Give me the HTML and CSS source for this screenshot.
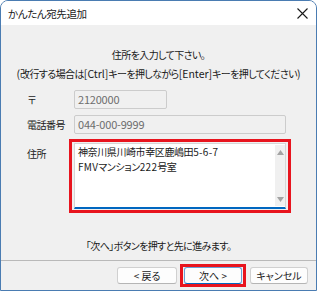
FILE: index.html
```html
<!DOCTYPE html>
<html lang="ja">
<head>
    <meta charset="UTF-8">
    <title>かんたん宛先追加</title>
    <link rel="stylesheet" href="styles.css">
</head>
<body>
    <div class="window">
        <div class="titlebar">
            <span class="title">かんたん宛先追加</span>
            <svg class="close" width="11" height="11" viewBox="0 0 11 11">
                <path d="M0.5 0.5 L10.5 10.5 M10.5 0.5 L0.5 10.5" stroke="#1a1a1a" stroke-width="1.1" fill="none"/>
            </svg>
        </div>

        <div class="content">
            <div class="intro">
                <p>住所を入力して下さい。</p>
                <p><span class="lat">(</span>改行する場合は<span class="lat">[Ctrl]</span>キーを押しながら<span class="lat">[Enter]</span>キーを押してください<span class="lat">)</span></p>
            </div>

            <div class="row">
                <span class="label">〒</span>
                <div class="field field-zip">2120000</div>
            </div>
            <div class="row">
                <span class="label">電話番号</span>
                <div class="field field-tel">044-000-9999</div>
            </div>
            <div class="row row-top">
                <span class="label">住所</span>
                <div class="highlight highlight-area">
                    <div class="address">
                        <div class="address-text">神奈川県川崎市幸区鹿嶋田<span class="lat">5-6-7</span><br><span class="lat">FMV</span>マンション<span class="lat">222</span>号室</div>
                        <div class="scrollbar">
                            <svg width="7" height="5" viewBox="0 0 7 5"><path d="M3.5 0 L7 5 L0 5 Z" fill="#a3a3a3"/></svg>
                            <svg width="7" height="5" viewBox="0 0 7 5"><path d="M0 0 L7 0 L3.5 5 Z" fill="#a3a3a3"/></svg>
                        </div>
                    </div>
                </div>
            </div>

            <p class="hint">「次へ」ボタンを押すと先に進みます。</p>
        </div>

        <div class="footer">
            <button class="btn btn-back">&lt;&nbsp;戻る</button>
            <div class="highlight highlight-btn">
                <button class="btn btn-next">次へ&nbsp;&gt;</button>
            </div>
            <button class="btn">キャンセル</button>
        </div>
    </div>
</body>
</html>
```

FILE: styles.css
```css
body {
    margin: 0;
    background: #ffffff;
    font-family: "Noto Sans CJK JP", "Noto Sans", sans-serif;
    font-size: 10px;
    color: #1a1a1a;
}

.window {
    width: 317px;
    height: 291px;
    box-sizing: border-box;
    border: 1px solid #4a7cb2;
    border-radius: 8px 8px 0 0;
    background: #f0f0f0;
    display: flex;
    flex-direction: column;
    overflow: hidden;
}

.titlebar {
    height: 24px;
    background: #ffffff;
    display: flex;
    align-items: center;
    justify-content: space-between;
    padding: 0 8px 0 7px;
}

.title {
    font-size: 10.5px;
    letter-spacing: -0.4px;
    font-feature-settings: "palt";
}

.content {
    flex: 1;
    padding: 0 0 0 26px;
}

.lat {
    font-size: 10.5px;
    letter-spacing: 0;
}

.intro {
    margin: 20px 0 0 -26px;
    text-align: center;
    line-height: 19px;
    letter-spacing: -0.6px;
    font-feature-settings: "palt";
}

.intro p, .hint {
    margin: 0;
}

.row {
    display: flex;
    align-items: center;
    margin-top: 7px;
}

.row + .row {
    margin-top: 6px;
}

.row-top {
    align-items: flex-start;
}

.row-top .label {
    margin-top: 6px;
}

.label {
    width: 47px;
    letter-spacing: -0.5px;
}

.field {
    height: 19px;
    box-sizing: border-box;
    border: 1px solid #cccccc;
    border-radius: 2px;
    background: #f0f0f0;
    color: #6d6d6d;
    padding: 0 0 0 3px;
    font-size: 11px;
    line-height: 17px;
    letter-spacing: -0.2px;
}

.field-zip {
    width: 93px;
}

.field-tel {
    width: 212px;
}

.highlight {
    border: 3px solid #e8141e;
}

.highlight-area {
    margin: -1px 0 0 -5px;
    padding: 1px 2px;
}

.address {
    width: 212px;
    height: 66px;
    box-sizing: border-box;
    background: #ffffff;
    border: 1px solid #d6d6d6;
    border-bottom: 2px solid #0067c0;
    display: flex;
}

.address-text {
    flex: 1;
    padding: 0 0 0 3px;
    line-height: 15px;
    letter-spacing: -0.4px;
    font-feature-settings: "palt";
}

.address-text .lat {
    font-size: 10px;
    letter-spacing: 0.3px;
}

.scrollbar {
    width: 10px;
    margin: 1px 0 1px 0;
    background: #f0f0f0;
    display: flex;
    flex-direction: column;
    justify-content: space-between;
    align-items: center;
    padding: 5px 0 4px;
}

.hint {
    margin: 23px 0 0 -26px;
    text-align: center;
    line-height: 19px;
    letter-spacing: -0.6px;
    font-feature-settings: "palt";
}

.footer {
    border-top: 1px solid #b9b9b9;
    height: 30px;
    box-sizing: border-box;
    display: flex;
    justify-content: flex-end;
    align-items: flex-start;
    gap: 3px;
    padding: 3px 8px 0 0;
}

.highlight-btn {
    padding: 0 1px;
    margin-right: 1px;
}

.btn {
    width: 58px;
    height: 17px;
    box-sizing: border-box;
    margin: 3px 0 0;
    padding: 0;
    border: 1px solid #d0d0d0;
    border-bottom-color: #b5b5b5;
    border-radius: 3px;
    background: #fdfdfd;
    font-family: inherit;
    font-size: 10px;
    letter-spacing: 0;
    font-feature-settings: "palt";
    color: #1a1a1a;
    line-height: 15px;
}

.btn-back {
    width: 60px;
}

.highlight-btn .btn {
    margin: 0;
}

.btn-next {
    border-color: #6a9fd6;
    border-bottom-color: #0067c0;
}
```
